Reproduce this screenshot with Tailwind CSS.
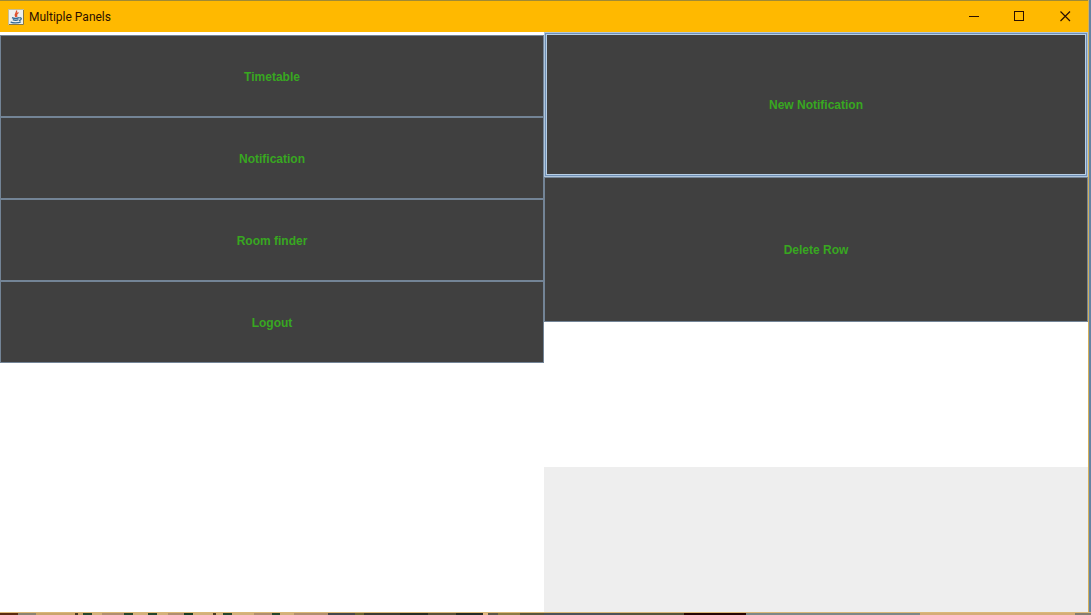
<!DOCTYPE html>
<html lang="en">
<head>
<meta charset="utf-8">
<title>Multiple Panels</title>
<script src="https://cdn.jsdelivr.net/npm/@tailwindcss/browser@4"></script>
</head>
<body class="flex h-screen flex-col overflow-hidden bg-white">
<div class="flex min-h-0 flex-1">
  <div class="flex min-w-0 flex-1 flex-col">
    <header class="flex h-8 shrink-0 items-center border-t border-[#a08a35] bg-[#ffb900] pl-2">
      <svg class="size-4 shrink-0" viewBox="0 0 16 16" fill="none" aria-hidden="true">
        <rect x=".5" y=".5" width="15" height="15" fill="#eef0ee" stroke="#c9bd94"/>
        <path d="M1 15.500H15.500V1" stroke="#857848"/>
        <path d="M8.500 1.500C9.500 4 5.500 4.500 7.800 8M10.500 3.500C8 5 8 6 9 7.800" stroke="#e0502c" stroke-width="1.300"/>
        <path d="M4 8.700C6 9.600 9.500 9.400 11 8.700M4.800 10.700C6.500 11.500 9 11.400 10.500 10.700M2.800 12.800C3.500 14.300 11 14.300 12.800 12.800M11.300 8.800C14.500 8.300 13.500 11.200 11 11.500" stroke="#356a94" stroke-width="1.300"/>
      </svg>
      <h1 class="ml-[5px] flex-1 font-[Roboto,sans-serif] text-xs text-[#2b1000]">Multiple Panels</h1>
      <button type="button" aria-label="Minimize" class="grid h-full w-[46px] place-items-center">
        <svg class="size-[11px]" viewBox="0 0 11 11" fill="none" stroke="#2b1000" shape-rendering="crispEdges"><path d="M0 5.500H10"/></svg>
      </button>
      <button type="button" aria-label="Maximize" class="grid h-full w-[45px] place-items-center">
        <svg class="size-[11px]" viewBox="0 0 11 11" fill="none" stroke="#2b1000" shape-rendering="crispEdges"><path d="M.5 .5H9.500V9.500H.5Z"/></svg>
      </button>
      <button type="button" aria-label="Close" class="grid h-full w-[46px] place-items-center">
        <svg class="size-[11px]" viewBox="0 0 11 11" fill="none" stroke="#2b1000" stroke-width="1.200"><path d="M.5 .5L10 10M10 .5L.5 10"/></svg>
      </button>
    </header>
    <main class="grid min-h-0 flex-1 grid-cols-2 font-['Liberation_Sans',Arial,sans-serif] text-xs font-bold text-[#38a721]">
      <nav class="flex flex-col pt-[3px]">
        <button type="button" class="h-[82px] border border-[#738496] bg-[#404040] pt-0.5">Timetable</button>
        <button type="button" class="h-[82px] border border-[#738496] bg-[#404040] pt-0.5">Notification</button>
        <button type="button" class="h-[82px] border border-[#738496] bg-[#404040] pt-0.5">Room finder</button>
        <button type="button" class="h-[82px] border border-[#738496] bg-[#404040] pt-0.5">Logout</button>
      </nav>
      <section class="grid grid-rows-4">
        <button type="button" class="border border-[#b0c6dc] bg-[#404040]">
          <span class="block h-full border border-[#6f8fb5]">
            <span class="grid h-full place-items-center border border-[#b8cfe5]">New Notification</span>
          </span>
        </button>
        <button type="button" class="border border-[#738496] bg-[#404040]">Delete Row</button>
        <div></div>
        <div class="bg-[#eeeeee]"></div>
      </section>
    </main>
  </div>
  <div class="w-[3px] border-l border-[#d4b05a] bg-[#6484a3]"></div>
</div>
<div class="h-[3px] shrink-0 border-t border-[#dcb878] bg-[linear-gradient(90deg,#5a2a10_0_18px,#8a8270_18px_36px,#c9a46c_36px_75px,#4a3a25_75px_78px,#c9a46c_78px_83px,#26452b_83px_92px,#d2b07c_92px_102px,#b08e70_102px_124px,#26452b_124px_133px,#d2b07c_133px_148px,#26452b_148px_157px,#d2b07c_157px_168px,#b08e70_168px_184px,#193c24_184px_193px,#d2b07c_193px_213px,#4a3a25_213px_216px,#d2b07c_216px_223px,#26452b_223px_232px,#d2b07c_232px_254px,#b08e70_254px_272px,#26452b_272px_280px,#d2b07c_280px_294px,#b08e70_294px_328px,#45464a_328px_355px,#6b6535_355px_364px,#3c3a32_364px_400px,#272c24_400px_428px,#58503a_428px_456px,#252a25_456px_483px,#e0b888_483px_488px,#5a5548_488px_498px,#8a7a45_498px_520px,#57543d_520px_544px,#4d5158_544px_620px,#55533b_620px_684px,#250504_684px_746px,#7d8787_746px_920px,#d4ac78_920px_1075px,#827c70_1075px)]"></div>
</body>
</html>
